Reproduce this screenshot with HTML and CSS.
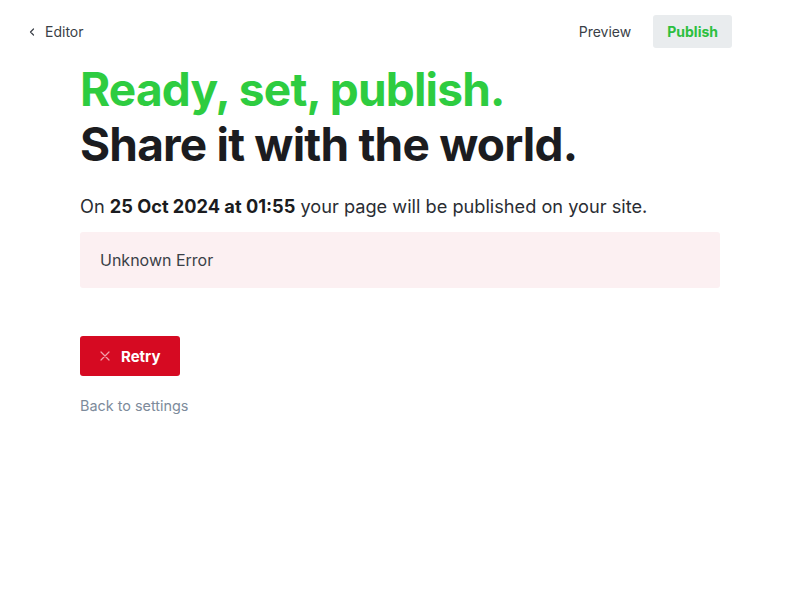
FILE: index.html
```html
<!DOCTYPE html>
<html>
<head>
<meta charset="utf-8">
<link rel="stylesheet" href="styles.css">
</head>
<body>
<header class="topbar">
  <a class="back" href="#">
    <svg width="8" height="8" viewBox="0 0 8 8" class="chev"><path d="M5.5 1 L2.5 4 L5.5 7" fill="none" stroke="#3a3f47" stroke-width="1.2" stroke-linecap="round" stroke-linejoin="round"/></svg>
    <span>Editor</span>
  </a>
  <div class="actions">
    <a class="preview" href="#">Preview</a>
    <a class="publish" href="#">Publish</a>
  </div>
</header>
<main class="content">
  <h1 class="title"><span class="green">Ready, set, publish.</span><br>Share it with the world.</h1>
  <p class="desc">On <strong>25 Oct 2024 at 01:55</strong> your page will be published on your site.</p>
  <div class="error">Unknown Error</div>
  <button class="retry">
    <svg width="10" height="10" viewBox="0 0 10 10"><path d="M1 1 L9 9 M9 1 L1 9" stroke="#f2a0aa" stroke-width="1.2" stroke-linecap="round"/></svg>
    <span>Retry</span>
  </button>
  <a class="backlink" href="#">Back to settings</a>
</main>
</body>
</html>
```
FILE: styles.css
```css
* { box-sizing: border-box; }
html, body { margin: 0; padding: 0; background: #fff; }
body { font-family: Inter, "Noto Sans", sans-serif; color: #1b1c20; }
a { text-decoration: none; }
.topbar {
  display: flex;
  justify-content: space-between;
  align-items: center;
  padding: 15px 68px 0 28px;
  height: 48px;
}
.back { display: flex; align-items: center; gap: 9px; color: #3a3f47; font-size: 14px; }
.chev { margin-top: 1px; }
.actions { display: flex; align-items: center; gap: 22px; }
.preview { color: #3a3f47; font-size: 14px; }
.publish {
  background: #e9ecee;
  color: #2cbf3f;
  font-weight: 700;
  font-size: 14px;
  padding: 0 14px;
  height: 33px;
  line-height: 33px;
  border-radius: 3px;
}
.content { padding: 0 80px; width: 800px; }
.title {
  margin: 14px 0 0;
  font-size: 46px;
  line-height: 55px;
  font-weight: 700;
  letter-spacing: -0.8px;
  color: #1b1c20;
}
.green { color: #2ecc40; }
.desc { margin: 21px 0 0; font-size: 18.2px; line-height: 26px; color: #2a2d33; }
.desc strong { font-weight: 700; color: #1b1c20; }
.error {
  margin-top: 13px;
  background: #fcf0f2;
  border-radius: 3px;
  height: 56px;
  padding: 0 20px;
  display: flex;
  align-items: center;
  font-size: 16px;
  color: #3a3f47;
}
.retry {
  margin-top: 48px;
  display: flex;
  align-items: center;
  gap: 11px;
  height: 40px;
  width: 100px;
  padding: 0 0 0 20px;
  background: #d60a22;
  border: none;
  border-radius: 3px;
  color: #fff;
  font-family: Inter, sans-serif;
  font-size: 15px;
  font-weight: 700;
}
.backlink { display: block; margin-top: 21px; font-size: 14.4px; color: #7d8b9b; }
```
